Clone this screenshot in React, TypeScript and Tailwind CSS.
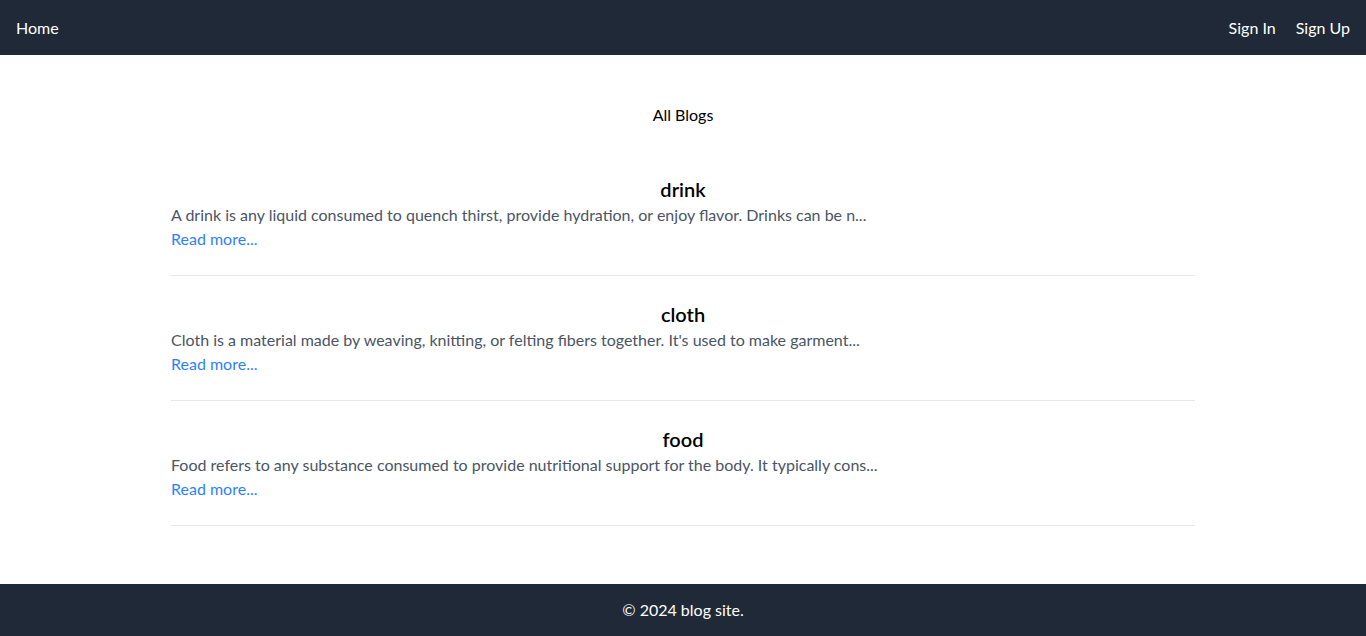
const blogs = [
  {
    title: 'drink',
    excerpt:
      'A drink is any liquid consumed to quench thirst, provide hydration, or enjoy flavor. Drinks can be n...',
  },
  {
    title: 'cloth',
    excerpt:
      "Cloth is a material made by weaving, knitting, or felting fibers together. It's used to make garment...",
  },
  {
    title: 'food',
    excerpt:
      'Food refers to any substance consumed to provide nutritional support for the body. It typically cons...',
  },
]

export default function App() {
  return (
    <div className="flex min-h-screen flex-col bg-white font-['Lato','Noto_Sans',sans-serif] text-base">
      <header className="flex h-[55px] items-center justify-between bg-[#1f2937] px-4 text-white">
        <a href="#">Home</a>
        <nav className="flex gap-5">
          <a href="#">Sign In</a>
          <a href="#">Sign Up</a>
        </nav>
      </header>

      <main className="flex-1 py-12">
        <h1 className="mb-6 text-center text-black">All Blogs</h1>
        <div className="mx-auto max-w-5xl">
          {blogs.map((blog) => (
            <div key={blog.title} className="border-b border-gray-200 py-6">
              <h2 className="text-center text-xl font-semibold text-black">{blog.title}</h2>
              <p className="text-gray-600">{blog.excerpt}</p>
              <a href="#" className="text-blue-500">
                Read more...
              </a>
            </div>
          ))}
        </div>
      </main>

      <footer className="flex h-[52px] items-center justify-center bg-[#1f2937] text-white">
        © 2024 blog site.
      </footer>
    </div>
  )
}
